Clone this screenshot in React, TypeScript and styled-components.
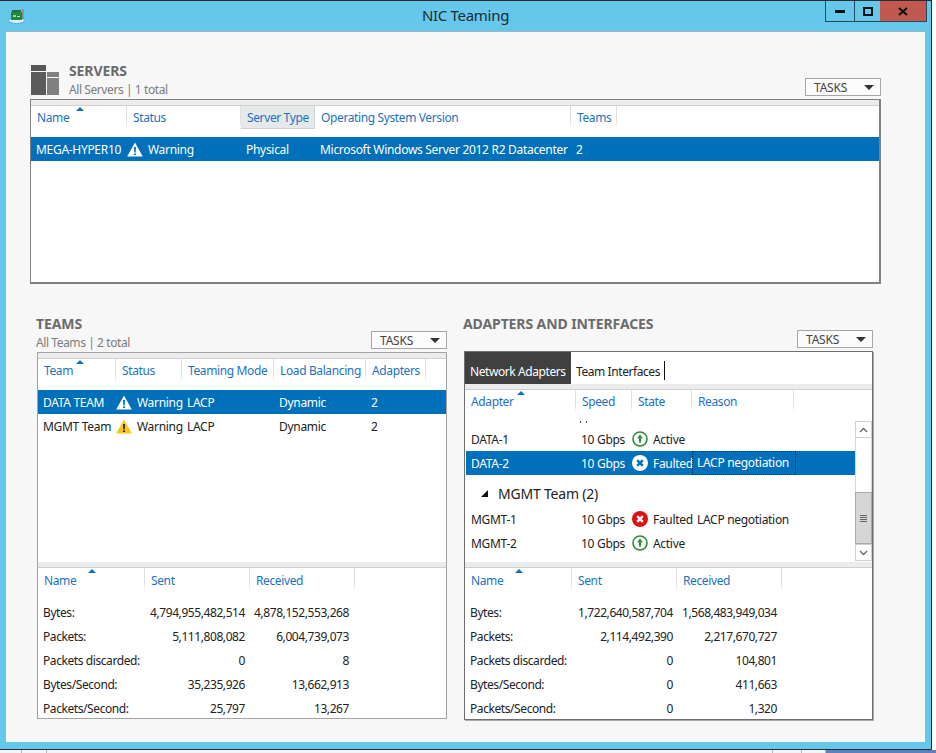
import React from "react";
import styled, { createGlobalStyle } from "styled-components";

const Global = createGlobalStyle`
  html, body { margin: 0; padding: 0; background: #fff; }
  body { font-family: "Noto Sans", "Open Sans", sans-serif; font-size: 12px; color: #222; }
  * { box-sizing: border-box; }
`;

const Page = styled.div`
  width: 936px; height: 753px; overflow: hidden; background: #fff;
`;
const Frame = styled.div`
  width: 932px; height: 750px; background: #65c8eb;
  border-top: 1px solid #2b2b2b; border-right: 1px solid #2b2b35; border-bottom: 1px solid #2b2b35;
`;
const TitleBar = styled.div`
  height: 30px; display: grid; grid-template-columns: 1fr auto 1fr; align-items: start;
`;
const AppIcon = styled.svg`
  display: block; margin: 7px 0 0 8px; width: 17px; height: 16px;
`;
const Title = styled.div`
  font-size: 15px; line-height: 20px; margin-top: 4px; color: #1c2a33; letter-spacing: -0.3px;
`;
const WinButtons = styled.div`
  justify-self: end; margin-right: 4px; display: flex; height: 21px;
  border: 1px solid #27475a; border-top: none;
`;
const WinBtn = styled.div<{ $w: number; $close?: boolean }>`
  width: ${p => p.$w}px; display: flex; align-items: center; justify-content: center;
  background: ${p => (p.$close ? "#c0594f" : "transparent")};
  border-left: ${p => (p.$close ? "none" : "1px solid #27475a")};
  &:first-child { border-left: none; }
`;
const Client = styled.div`
  margin-left: 6px; width: 919px; height: 711px; background: #f7f7f7;
  border-top: 1px solid #9fb6c4; padding-top: 33px;
`;
const ServerSection = styled.section`
  margin-left: 24px; width: 851px;
`;
const ServerHead = styled.div`
  height: 34px; display: flex; align-items: flex-start;
`;
const ServerGlyph = styled.svg`
  width: 30px; height: 30px; display: block; margin: 0 8px 0 1px; flex: none;
`;
const HeadText = styled.div`
  flex: 1; min-width: 0;
`;
const ServerHeadText = styled(HeadText)`
  margin-top: -2px;
`;
const SectionTitle = styled.div`
  font-size: 14px; font-weight: 700; line-height: 16px; color: #6b6b6b; white-space: nowrap; letter-spacing: -0.1px;
`;
const SectionSub = styled.div`
  font-size: 12px; line-height: 16px; margin-top: 3px; color: #7c7c7c; white-space: nowrap; letter-spacing: -0.42px;
`;
const TasksButton = styled.div`
  width: 76px; height: 18px; flex: none; align-self: flex-end; margin-bottom: 3px;
  border: 1px solid #a6a6a6; background: #fbfbfb; display: flex; align-items: center; justify-content: space-between;
  padding: 0 6px 0 8px; font-size: 12px; color: #444; letter-spacing: -0.2px;
`;
const AdapterTasks = styled(TasksButton)`
  margin-right: 1px;
`;
const Panel = styled.div<{ $h: number; $strong?: boolean }>`
  height: ${p => p.$h}px; background: #fff; position: relative; overflow: hidden;
  display: flex; flex-direction: column;
  border: 1px solid ${p => (p.$strong ? "#6f6f6f" : "#a3a3a3")};
  ${p => (p.$strong ? "box-shadow: 1px 1px 0 #aaa;" : "")}
`;
const ServerPanel = styled(Panel)`
  overflow: visible;
  border-width: 1px 2px 2px 1px;
  border-color: #808080;
`;
const TeamsPanel = styled(Panel)`
  margin-left: 1px;
`;
const AdaptersPanel = styled(Panel)`
  margin: 0 1px;
`;
const Caret = styled.span`
  width: 0; height: 0; border-left: 5px solid transparent; border-right: 5px solid transparent; border-top: 5px solid #333;
`;
const Strip = styled.div`
  height: 6px; flex: none; background: #ececec; border-bottom: 1px solid #cfcfcf;
`;
const TableHeader = styled.div<{ $cols: string }>`
  position: relative; display: grid; grid-template-columns: ${p => p.$cols}; height: 22px; flex: none; margin-bottom: 9px;
`;
const StatsHeader = styled(TableHeader)`
  margin-bottom: 10px;
`;
const HeadCell = styled.div<{ $hot?: boolean; $top?: number }>`
  color: #1b72bf; font-size: 12px; line-height: 22px; padding: ${p => p.$top ?? 1}px 0 0 6px; white-space: nowrap; letter-spacing: -0.38px;
  border-right: 1px solid #e2e2e2;
  border-image: linear-gradient(#dedede, #dedede 60%, #ffffff) 1;
  background: ${p => (p.$hot ? "#e6e9ea" : "transparent")};
  ${p => (p.$hot ? "box-shadow: inset 0 -1px 0 #cfd4d6; border-image: none; border-right-color:#cfd4d6;" : "")}
`;
const SortMark = styled.span<{ $x: number }>`
  position: absolute; top: 1px; left: ${p => p.$x}px; width: 0; height: 0;
  border-left: 4px solid transparent; border-right: 4px solid transparent; border-bottom: 4px solid #1470b8;
`;
const Row = styled.div<{ $cols: string; $sel?: boolean }>`
  display: grid; grid-template-columns: ${p => p.$cols}; height: 24px; align-items: center; white-space: nowrap;
  font-size: 12px; letter-spacing: -0.3px;
  color: ${p => (p.$sel ? "#fff" : "#222")};
  background: ${p => (p.$sel ? "#0070bb" : "transparent")};
`;
const Cell = styled.div`
  padding-left: 5px; min-width: 0;
`;
const StatusCell = styled.div`
  display: flex; align-items: center; gap: 5px;
`;
const FocusCell = styled.div`
  height: 100%; padding-left: 4px; line-height: 22px; border: 1px dotted #0b2c4d; margin-right: -2px;
`;
const Bottom = styled.div`
  display: flex; margin-top: 32px; align-items: flex-start;
`;
const TeamsSection = styled.section`
  margin-left: 30px; width: 411px;
`;
const AdaptersSection = styled.section`
  margin-left: 16px; width: 411px;
`;
const BlockHead = styled.div`
  height: 36px; display: flex; align-items: flex-start;
`;
const AdapterHead = styled(BlockHead)`
  height: 35px;
`;
const Upper = styled.div`
  flex: 1; min-height: 0; display: flex; flex-direction: column;
`;
const Lower = styled.div`
  height: 156px; flex: none;
`;
const StatRow = styled.div<{ $cols: string }>`
  display: grid; grid-template-columns: ${p => p.$cols}; height: 24px; align-items: center; font-size: 12px; white-space: nowrap;
  color: #222; letter-spacing: -0.42px;
`;
const StatLabel = styled.div`
  padding-left: 5px;
`;
const StatValue = styled.div<{ $pr: number }>`
  text-align: right; padding-right: ${p => p.$pr}px;
`;
const Tabs = styled.div`
  height: 32px; flex: none; display: flex; background: #fff;
`;
const Tab = styled.div<{ $on?: boolean }>`
  height: 32px; width: ${p => (p.$on ? "106px" : "auto")}; padding: 10px 0 0 5px; line-height: 20px; font-size: 12px; letter-spacing: -0.42px; white-space: nowrap;
  background: ${p => (p.$on ? "#404040" : "transparent")}; color: ${p => (p.$on ? "#fff" : "#222")};
`;
const TabCursor = styled.div`
  width: 1px; height: 19px; background: #111; margin: 9px 0 0 4px;
`;
const ListArea = styled.div`
  height: 141px; flex: none; display: flex; align-items: flex-start;
`;
const List = styled.div`
  width: 389px; height: 141px; margin-left: 1px; flex: none; overflow: hidden;
`;
const ScrollRemnant = styled.svg`
  display: block; width: 389px; height: 6px;
`;
const GroupRow = styled.div`
  height: 24px; margin: 6px 0 2px; display: flex; align-items: center; padding-left: 15px; font-size: 14px; color: #222; letter-spacing: -0.2px; white-space: nowrap;
`;
const GroupMark = styled.span`
  width: 0; height: 0; margin-right: 10px; border-left: 7px solid transparent; border-bottom: 7px solid #111;
`;
const Scroll = styled.div`
  width: 17px; height: 140px; display: flex; flex-direction: column; flex: none;
`;
const ScrollBtn = styled.div`
  height: 17px; flex: none; border: 1px solid #cfcfcf; background: #fff; display: flex; align-items: center; justify-content: center;
`;
const ScrollTrack = styled.div<{ $h: number }>`
  height: ${p => p.$h}px; flex: none; background: #fff; border-left: 1px solid #d8d8d8; border-right: 1px solid #d8d8d8;
`;
const ScrollThumb = styled.div`
  flex: 1; background: #d6d6d6; border: 1px solid #a9a9a9; display: flex; flex-direction: column; align-items: center; justify-content: center; gap: 1px;
`;
const Grip = styled.span`
  width: 7px; height: 1px; background: #666;
`;
const StatusBand = styled.div`
  height: 3px; display: flex;
`;
const BandCell = styled.div<{ $w: number }>`
  width: ${p => p.$w}px; background: #f4f4f4; border-right: 1px solid #b5b5b5;
`;
const BandBlue = styled.div`
  flex: 1; background: #5f80bd;
`;

const Warn = ({ dark }: { dark?: boolean }) => (
  <svg width="16" height="15" viewBox="0 0 16 15" style={{ flex: "none" }}>
    <path d="M8 .5 15.8 14.5H.2Z" fill={dark ? "#fdc417" : "#fff"} />
    <path d="M7 5h2l-.3 5.4H7.3ZM7 11.4h2V13H7Z" fill={dark ? "#222" : "#0070bb"} />
  </svg>
);
const Active = () => (
  <svg width="16" height="16" viewBox="0 0 16 16" style={{ flex: "none" }}>
    <circle cx="8" cy="8" r="7" fill="#fff" stroke="#2e8b35" strokeWidth="1.6" />
    <path d="M8 3.6 11 7.2H9.1V11.6H6.9V7.2H5Z" fill="#2e8b35" />
  </svg>
);
const Fault = ({ sel }: { sel?: boolean }) => (
  <svg width="16" height="16" viewBox="0 0 16 16" style={{ flex: "none" }}>
    <circle cx="8" cy="8" r="8" fill={sel ? "#fff" : "#e01010"} />
    <path d="M5.2 5.2 10.8 10.8M10.8 5.2 5.2 10.8" stroke={sel ? "#0070bb" : "#fff"} strokeWidth="2.4" />
  </svg>
);
const ChevUp = () => (
  <svg width="9" height="6" viewBox="0 0 9 6"><path d="M1 5 4.5 1.5 8 5" fill="none" stroke="#666" strokeWidth="1.3" /></svg>
);
const ChevDown = () => (
  <svg width="9" height="6" viewBox="0 0 9 6"><path d="M1 1 4.5 4.5 8 1" fill="none" stroke="#666" strokeWidth="1.3" /></svg>
);

const statsCols = "107px 105px 105px 1fr";
const Stats = ({ sort, inset, rows }: { sort: number; inset: number; rows: string[][] }) => (
  <Lower>
    <Strip />
    <StatsHeader $cols={statsCols}>
      <HeadCell $top={2}>Name</HeadCell><HeadCell $top={2}>Sent</HeadCell><HeadCell $top={2}>Received</HeadCell>
      <SortMark $x={sort} />
    </StatsHeader>
    {rows.map(r => (
      <StatRow key={r[0]} $cols={statsCols}>
        <StatLabel>{r[0]}</StatLabel>
        <StatValue $pr={inset}>{r[1]}</StatValue>
        <StatValue $pr={inset + 1}>{r[2]}</StatValue>
      </StatRow>
    ))}
  </Lower>
);

const serverCols = "96px 114px 74px 256px 46px 1fr";
const teamCols = "78px 66px 92px 92px 60px 1fr";
const adapterCols = "111px 56px 60px 102px 1fr";
const adapterRowCols = "110px 56px 60px 102px 1fr";

export default function App() {
  return (
    <Page>
      <Global />
      <Frame>
        <TitleBar>
          <AppIcon viewBox="0 0 17 16">
            <ellipse cx="8.5" cy="12.5" rx="8" ry="3" fill="#dcefff" stroke="#5aa5e6" />
            <rect x="3" y="4" width="11" height="8" fill="#1f8a3f" />
            <rect x="4" y="2" width="9" height="2" fill="#2d6b45" />
            <rect x="14" y="1" width="1.5" height="10" fill="#7d8a8a" />
            <rect x="5" y="7" width="3" height="2" fill="#9fd49f" />
            <rect x="9" y="8" width="3" height="1" fill="#bfe6bf" />
          </AppIcon>
          <Title>NIC Teaming</Title>
          <WinButtons>
            <WinBtn $w={28}>
              <svg width="11" height="4"><rect width="10" height="3" y="1" fill="#111" /></svg>
            </WinBtn>
            <WinBtn $w={26}>
              <svg width="10" height="9"><rect x="1" y="1" width="8" height="7" fill="none" stroke="#111" strokeWidth="2" /></svg>
            </WinBtn>
            <WinBtn $w={46} $close>
              <svg width="10" height="9"><path d="M1 1 9 8M9 1 1 8" stroke="#111" strokeWidth="2.2" /></svg>
            </WinBtn>
          </WinButtons>
        </TitleBar>
        <Client>
          <ServerSection>
            <ServerHead>
              <ServerGlyph viewBox="0 0 30 30">
                <rect x="0" y="0" width="15" height="6" fill="#565656" />
                <rect x="0" y="7" width="15" height="23" fill="#5b5b5b" />
                <rect x="16" y="7" width="12" height="5" fill="#808080" />
                <rect x="16" y="13" width="12" height="17" fill="#808080" />
              </ServerGlyph>
              <ServerHeadText>
                <SectionTitle>SERVERS</SectionTitle>
                <SectionSub>All Servers | 1 total</SectionSub>
              </ServerHeadText>
              <TasksButton>TASKS<Caret /></TasksButton>
            </ServerHead>
            <ServerPanel $h={185}>
              <Strip />
              <TableHeader $cols={serverCols}>
                <HeadCell>Name</HeadCell>
                <HeadCell>Status</HeadCell>
                <HeadCell $hot>Server Type</HeadCell>
                <HeadCell>Operating System Version</HeadCell>
                <HeadCell>Teams</HeadCell>
                <SortMark $x={45} />
              </TableHeader>
              <Row $cols={serverCols} $sel>
                <Cell>MEGA-HYPER10</Cell>
                <StatusCell><Warn />Warning</StatusCell>
                <Cell>Physical</Cell>
                <Cell>Microsoft Windows Server 2012 R2 Datacenter</Cell>
                <Cell>2</Cell>
              </Row>
            </ServerPanel>
          </ServerSection>

          <Bottom>
            <TeamsSection>
              <BlockHead>
                <HeadText>
                  <SectionTitle>TEAMS</SectionTitle>
                  <SectionSub>All Teams | 2 total</SectionSub>
                </HeadText>
                <TasksButton>TASKS<Caret /></TasksButton>
              </BlockHead>
              <TeamsPanel $h={367}>
                <Upper>
                  <Strip />
                  <TableHeader $cols={teamCols}>
                    <HeadCell>Team</HeadCell>
                    <HeadCell>Status</HeadCell>
                    <HeadCell>Teaming Mode</HeadCell>
                    <HeadCell>Load Balancing</HeadCell>
                    <HeadCell>Adapters</HeadCell>
                    <SortMark $x={38} />
                  </TableHeader>
                  <Row $cols={teamCols} $sel>
                    <Cell>DATA TEAM</Cell>
                    <StatusCell><Warn />Warning</StatusCell>
                    <Cell>LACP</Cell><Cell>Dynamic</Cell><Cell>2</Cell>
                  </Row>
                  <Row $cols={teamCols}>
                    <Cell>MGMT Team</Cell>
                    <StatusCell><Warn dark />Warning</StatusCell>
                    <Cell>LACP</Cell><Cell>Dynamic</Cell><Cell>2</Cell>
                  </Row>
                </Upper>
                <Stats sort={50} inset={5} rows={[
                  ["Bytes:", "4,794,955,482,514", "4,878,152,553,268"],
                  ["Packets:", "5,111,808,082", "6,004,739,073"],
                  ["Packets discarded:", "0", "8"],
                  ["Bytes/Second:", "35,235,926", "13,662,913"],
                  ["Packets/Second:", "25,797", "13,267"],
                ]} />
              </TeamsPanel>
            </TeamsSection>

            <AdaptersSection>
              <AdapterHead>
                <HeadText>
                  <SectionTitle>ADAPTERS AND INTERFACES</SectionTitle>
                </HeadText>
                <AdapterTasks>TASKS<Caret /></AdapterTasks>
              </AdapterHead>
              <AdaptersPanel $h={369} $strong>
                <Tabs>
                  <Tab $on>Network Adapters</Tab>
                  <Tab>Team Interfaces</Tab>
                  <TabCursor />
                </Tabs>
                <Strip />
                <TableHeader $cols={adapterCols}>
                  <HeadCell>Adapter</HeadCell>
                  <HeadCell>Speed</HeadCell>
                  <HeadCell>State</HeadCell>
                  <HeadCell>Reason</HeadCell>
                  <SortMark $x={52} />
                </TableHeader>
                <ListArea>
                  <List>
                    <ScrollRemnant viewBox="0 0 389 6">
                      <rect x="114" y="0" width="1" height="2" fill="#555" />
                      <rect x="120" y="0" width="1" height="2" fill="#555" />
                    </ScrollRemnant>
                    <Row $cols={adapterRowCols}>
                      <Cell>DATA-1</Cell><Cell>10 Gbps</Cell>
                      <StatusCell><Active />Active</StatusCell>
                      <Cell />
                    </Row>
                    <Row $cols={adapterRowCols} $sel>
                      <Cell>DATA-2</Cell><Cell>10 Gbps</Cell>
                      <StatusCell><Fault sel />Faulted</StatusCell>
                      <FocusCell>LACP negotiation</FocusCell>
                    </Row>
                    <GroupRow><GroupMark />MGMT Team (2)</GroupRow>
                    <Row $cols={adapterRowCols}>
                      <Cell>MGMT-1</Cell><Cell>10 Gbps</Cell>
                      <StatusCell><Fault />Faulted</StatusCell>
                      <Cell>LACP negotiation</Cell>
                    </Row>
                    <Row $cols={adapterRowCols}>
                      <Cell>MGMT-2</Cell><Cell>10 Gbps</Cell>
                      <StatusCell><Active />Active</StatusCell>
                      <Cell />
                    </Row>
                  </List>
                  <Scroll>
                    <ScrollBtn><ChevUp /></ScrollBtn>
                    <ScrollTrack $h={54} />
                    <ScrollThumb><Grip /><Grip /><Grip /><Grip /></ScrollThumb>
                    <ScrollBtn><ChevDown /></ScrollBtn>
                  </Scroll>
                </ListArea>
                <Stats sort={50} inset={4} rows={[
                  ["Bytes:", "1,722,640,587,704", "1,568,483,949,034"],
                  ["Packets:", "2,114,492,390", "2,217,670,727"],
                  ["Packets discarded:", "0", "104,801"],
                  ["Bytes/Second:", "0", "411,663"],
                  ["Packets/Second:", "0", "1,320"],
                ]} />
              </AdaptersPanel>
            </AdaptersSection>
          </Bottom>
        </Client>
      </Frame>
      <StatusBand>
        <BandCell $w={22} /><BandCell $w={25} /><BandCell $w={726} /><BandCell $w={29} /><BandCell $w={24} /><BandBlue />
      </StatusBand>
    </Page>
  );
}
